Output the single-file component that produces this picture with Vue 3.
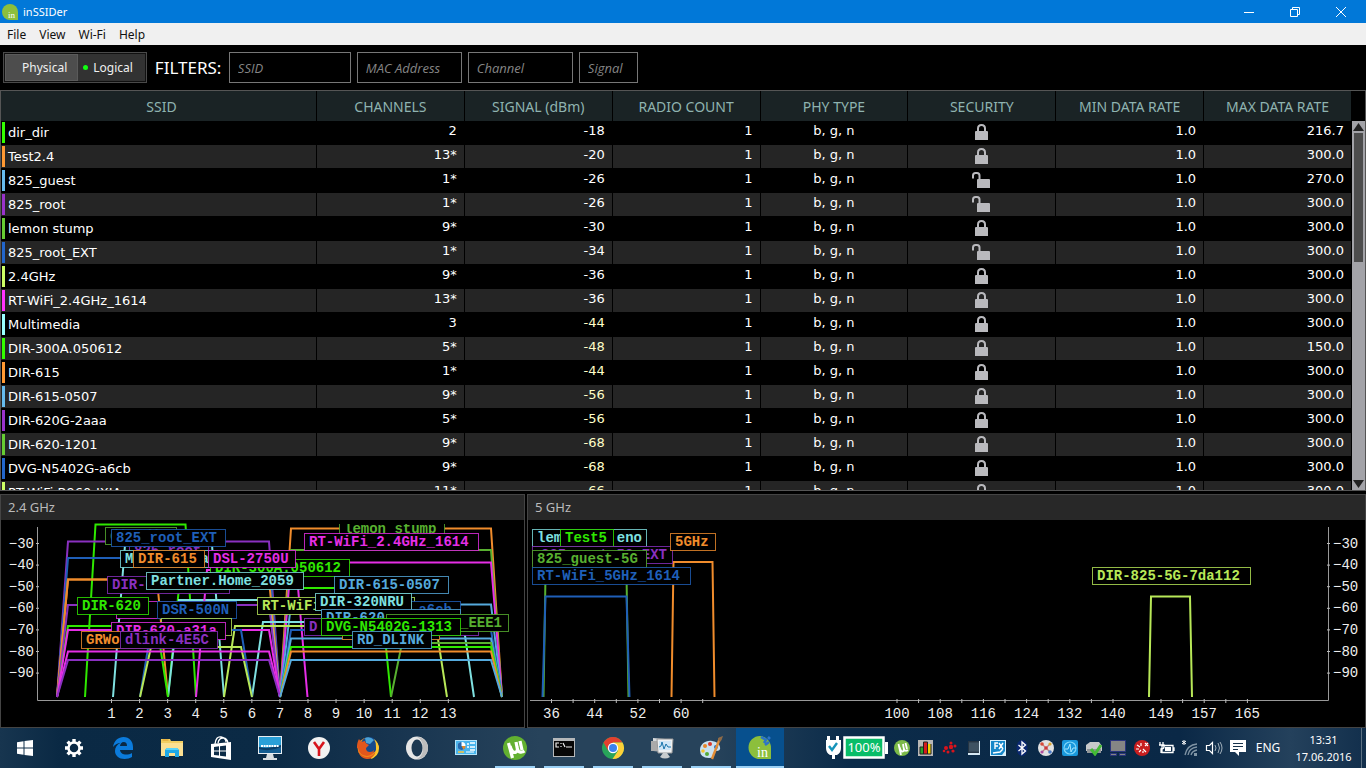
<script setup>
const palette = ['#33ff00', '#ff9933', '#66bbee', '#9933cc', '#66cc33', '#2266cc', '#ccff66', '#ff33ff', '#99ffff']

const columns = ['SSID', 'CHANNELS', 'SIGNAL (dBm)', 'RADIO COUNT', 'PHY TYPE', 'SECURITY', 'MIN DATA RATE', 'MAX DATA RATE']

const networks = [
  ['dir_dir', '2', -18, true, '216.7'],
  ['Test2.4', '13*', -20, true, '300.0'],
  ['825_guest', '1*', -26, false, '270.0'],
  ['825_root', '1*', -26, false, '300.0'],
  ['lemon stump', '9*', -30, true, '300.0'],
  ['825_root_EXT', '1*', -34, false, '300.0'],
  ['2.4GHz', '9*', -36, true, '300.0'],
  ['RT-WiFi_2.4GHz_1614', '13*', -36, true, '300.0'],
  ['Multimedia', '3', -44, true, '300.0'],
  ['DIR-300A.050612', '5*', -48, true, '150.0'],
  ['DIR-615', '1*', -44, true, '300.0'],
  ['DIR-615-0507', '9*', -56, true, '300.0'],
  ['DIR-620G-2aaa', '5*', -56, true, '300.0'],
  ['DIR-620-1201', '9*', -68, true, '300.0'],
  ['DVG-N5402G-a6cb', '9*', -68, true, '300.0'],
  ['RT-WiFi-B960-IXIA', '11*', -66, true, '300.0'],
].map(([ssid, channels, signal, locked, max], i) => ({ ssid, channels, signal, locked, max, color: palette[i % palette.length] }))

const filters = [
  { name: 'SSID', size: 'wide' },
  { name: 'MAC Address', size: 'mid' },
  { name: 'Channel', size: 'mid' },
  { name: 'Signal', size: 'small' },
]

const G = '#2fe800', O = '#f08c2c', L = '#55aadd', P = '#8a30c0', D = '#58b030', B = '#1f5fb8', Y = '#b8e858', M = '#e62ee6', C = '#7fe0e0'

const levels = [-30, -40, -50, -60, -70, -80, -90].map((v, i) => ({ v: '−' + Math.abs(v), y: 543.5 + i * 21.6 }))

const shape = ([x1, x2, top, slope, color]) => ({
  points: `${x1},697 ${x1 + slope},${top} ${x2 - slope},${top} ${x2},697`,
  color,
})

const traces24 = [
  [85, 196, 524.5, 10.5, G], [280, 502, 528.5, 11, O], [57, 280, 541.5, 11, P],
  [280, 502, 550, 11, D], [57, 280, 558, 11, B], [280, 502, 562.5, 11, M],
  [113, 224, 545, 12, C], [168, 391, 588, 11, G], [57, 168, 579.5, 11, O],
  [57, 280, 579.5, 11, O], [168, 280, 600, 11, C], [280, 502, 604.5, 11, L],
  [57, 280, 605, 11, P], [196, 307.5, 570, 11, M], [252, 474, 622, 11, C],
  [224, 447, 626, 11, Y], [57, 168, 626, 11, G], [57, 280, 630, 11, M],
  [140, 252, 630, 11, B], [280, 502, 630, 11, B], [280, 502, 638.5, 11, L],
  [140, 252, 647, 11, Y], [391, 502, 643, 11, D], [280, 502, 647, 11, G],
  [280, 502, 651.5, 11, O], [57, 280, 651.5, 11, M], [57, 280, 660, 11, P],
  [280, 502, 660, 11, L],
].map(shape)

const tag = ([x, y, w, color, text, offset = 5]) => ({ x: x + 0.5, y: y + 0.5, w, color, text, tx: x + offset })

const tags24 = [
  [105, 527, 71, D, 'dir_dir'],
  [129, 542, 79, P, '825_root'],
  [111, 529, 114, B, '825_root_EXT'],
  [339, 520, 105, D, 'lemon stump'],
  [304, 533, 174, M, 'RT-WiFi_2.4GHz_1614'],
  [210, 559, 139, G, 'DIR-300A.050612'],
  [120, 550, 97, C, 'Multimedia'],
  [133, 550, 71, O, 'DIR-615'],
  [208, 550, 87, M, 'DSL-2750U'],
  [107, 576, 122, P, 'DIR-620G-2aaa'],
  [146, 572, 157, C, 'Partner.Home_2059'],
  [334, 576, 114, L, 'DIR-615-0507'],
  [116, 601, 113, M, ''],
  [77, 597, 71, G, 'DIR-620'],
  [157, 601, 79, B, 'DSR-500N'],
  [161, 618, 70, Y, ''],
  [111, 622, 114, M, 'DIR-620-a31a'],
  [81, 631, 71, O, 'GRWo'],
  [120, 631, 97, P, 'dlink-4E5C'],
  [257, 597, 157, Y, 'RT-WiFi-B960-IXIA'],
  [321, 601, 139, B, 'DVG-N5402G-a6cb'],
  [315, 593, 96, C, 'DIR-320NRU'],
  [321, 609, 139, L, 'DIR-620'],
  [342, 622, 97, O, ''],
  [304, 618, 174, P, 'D'],
  [386, 614, 122, D, '_EEE1', 74],
  [321, 618, 139, G, 'DVG-N5402G-1313'],
  [352, 631, 79, L, 'RD_DLINK'],
].map(tag)

const channels24 = Array.from({ length: 13 }, (_, i) => ({ label: i + 1, x: 111.5 + i * 28.07 }))

const traces5 = [
  [671.5, 714.5, 562, 2, O],
  [543.5, 628.5, 575, 2, D],
  [542.5, 629.5, 596.5, 3, B],
  [1149, 1192, 596.5, 2, Y],
].map(shape)

const tags5 = [
  [532, 529, 114, C, 'lem'],
  [560, 529, 53, G, 'Test5'],
  [532, 546, 140, P, '825_root_5G_EXT', 9],
  [532, 550, 114, D, '825_guest-5G'],
  [532, 567, 158, B, 'RT-WiFi_5GHz_1614'],
  [670, 533, 45, O, '5GHz'],
  [1092, 567, 158, Y, 'DIR-825-5G-7da112'],
].map(tag)

const channels5 = [
  ...[36, 0, 44, 0, 52, 0, 60, 0].map((label, i) => ({ label, x: 551.5 + i * 21.6 })),
  ...[100, 0, 108, 0, 116, 0, 124, 0, 132, 0, 140].map((label, i) => ({ label, x: 897 + i * 21.6 })),
  ...[149, 0, 157, 0, 165].map((label, i) => ({ label, x: 1161 + i * 21.6 })),
]
</script>

<template>
  <div class="desktop">
    <header class="titlebar">
      <svg class="logo" width="16" height="16" viewBox="0 0 16 16" aria-hidden="true">
        <path d="M8 0a8 8 0 0 1 8 8v8H8A8 8 0 0 1 8 0z" fill="#8cbf3c" />
        <text x="6" y="14" class="logo-text">in</text>
      </svg>
      <h1>inSSIDer</h1>
      <div class="winbtns">
        <button type="button" aria-label="Minimize"><svg width="10" height="10"><path d="M0 5.500h10" stroke="#fff" /></svg></button>
        <button type="button" aria-label="Restore"><svg width="10" height="10"><path d="M.5 2.500h7v7h-7zM2.500 2V.5h7v7H8" stroke="#fff" fill="none" /></svg></button>
        <button type="button" aria-label="Close"><svg width="10" height="10"><path d="M0 0l10 10M10 0L0 10" stroke="#fff" /></svg></button>
      </div>
    </header>

    <nav class="menu">
      <button v-for="m in ['File', 'View', 'Wi-Fi', 'Help']" :key="m" type="button">{{ m }}</button>
    </nav>

    <section class="toolbar">
      <div class="switch">
        <button type="button" class="on">Physical</button>
        <button type="button"><i class="dot"></i>Logical</button>
      </div>
      <span class="filters">FILTERS:</span>
      <input v-for="f in filters" :key="f.name" type="text" :class="f.size" :placeholder="f.name" :aria-label="f.name" />
    </section>

    <section class="list">
      <div class="rows">
        <table>
          <thead>
            <tr><th v-for="c in columns" :key="c">{{ c }}</th></tr>
          </thead>
          <tbody>
            <tr v-for="n in networks" :key="n.ssid">
              <td class="ssid"><div class="name"><i class="bar" :style="{ background: n.color }"></i>{{ n.ssid }}</div></td>
              <td class="num">{{ n.channels }}</td>
              <td class="num" :class="{ weak: n.signal <= -44 }">{{ n.signal }}</td>
              <td class="num">1</td>
              <td class="phy">b, g, n</td>
              <td class="lock">
                <svg v-if="n.locked" width="20" height="18" viewBox="0 0 20 18" role="img" aria-label="Secured">
                  <path d="M6 9V5.500Q6 2 9.500 2t3.500 3.500V9" fill="none" stroke="#b9b9bd" stroke-width="2" />
                  <path d="M3 9q0-1 1-1h11q1 0 1 1v8H3z" fill="#b9b9bd" />
                </svg>
                <svg v-else width="20" height="18" viewBox="0 0 20 18" role="img" aria-label="Open">
                  <path d="M1 7.500V4.500Q1 2 3.500 2h1.500Q7.500 2 7.500 4.500V9" fill="none" stroke="#b9b9bd" stroke-width="2" />
                  <path d="M5 9q0-1 1-1h11q1 0 1 1v8H5z" fill="#b9b9bd" />
                </svg>
              </td>
              <td class="num">1.0</td>
              <td class="num">{{ n.max }}</td>
            </tr>
          </tbody>
        </table>
      </div>
      <div class="scroll" aria-hidden="true">
        <svg width="13" height="12"><path d="M1 10l5.500-8L12 10z" fill="#222" /></svg>
        <div class="thumb"></div>
        <svg class="down" width="13" height="12"><path d="M1 2l5.500 8L12 2z" fill="#222" /></svg>
      </div>
    </section>

    <section class="charts">
      <article class="panel ghz24">
        <h2>2.4 GHz</h2>
        <svg class="plot" viewBox="1 520 523 207" role="img" aria-label="2.4 GHz channel graph">
          <path class="axis" d="M37.500 527V700.500H520" />
          <g v-for="l in levels" :key="l.v">
            <path class="tick" :d="`M36 ${l.y}h3`" />
            <text class="scale" x="34" :y="l.y + 4" text-anchor="end">{{ l.v }}</text>
          </g>
          <g v-for="c in channels24" :key="c.label">
            <path class="tick" :d="`M${c.x} 699v4`" />
            <text class="scale" :x="c.x" y="718" text-anchor="middle">{{ c.label }}</text>
          </g>
          <polyline v-for="(t, i) in traces24" :key="'t' + i" class="trace" :points="t.points" :stroke="t.color" />
          <g v-for="(t, i) in tags24" :key="i">
            <rect :x="t.x" :y="t.y" :width="t.w" height="17" :stroke="t.color" class="box" />
            <text class="tag" :x="t.tx" :y="t.y + 12" :fill="t.color">{{ t.text }}</text>
          </g>
          <rect x="330" y="520" width="130" height="4" />
        </svg>
      </article>
      <article class="panel ghz5">
        <h2>5 GHz</h2>
        <svg class="plot" viewBox="528 520 837 207" role="img" aria-label="5 GHz channel graph">
          <path class="axis" d="M1328.500 527V700.500H530" />
          <g v-for="l in levels" :key="l.v">
            <path class="tick" :d="`M1327 ${l.y}h3`" />
            <text class="scale" x="1333" :y="l.y + 4">{{ l.v }}</text>
          </g>
          <g v-for="c in channels5" :key="c.x">
            <path class="tick" :d="`M${c.x} 699v4`" />
            <text v-if="c.label" class="scale" :x="c.x" y="718" text-anchor="middle">{{ c.label }}</text>
          </g>
          <polyline v-for="(t, i) in traces5" :key="'t' + i" class="trace" :points="t.points" :stroke="t.color" />
          <g v-for="(t, i) in tags5" :key="i">
            <rect :x="t.x" :y="t.y" :width="t.w" height="17" :stroke="t.color" class="box" />
            <text class="tag" :x="t.tx" :y="t.y + 12" :fill="t.color">{{ t.text }}</text>
          </g>
          <text class="tag" x="642" y="542" text-anchor="end" fill="#7fe0e0">eno</text>
        </svg>
      </article>
    </section>

    <footer class="taskbar">
      <div class="apps">
        <button type="button" aria-label="Start"><svg width="24" height="24" viewBox="0 0 24 24"><path d="M4 6.300l6.500-1v6.200H4zM11.500 5.100L20 4v7.500h-8.500zM4 12.500h6.500v6.200L4 17.700zM11.500 12.500H20V20l-8.500-1.100z" fill="#fff" /></svg></button>
        <button type="button" aria-label="Settings"><svg width="24" height="24" viewBox="0 0 24 24"><circle cx="12" cy="12" r="5.500" fill="none" stroke="#fff" stroke-width="2.500" /><path d="M12 3v3M12 18v3M3 12h3M18 12h3M5.600 5.600l2.200 2.200M16.200 16.200l2.200 2.200M18.400 5.600l-2.200 2.200M7.800 16.200l-2.200 2.200" stroke="#fff" stroke-width="3.400" /></svg></button>
        <button type="button" aria-label="Edge"><svg width="24" height="24" viewBox="0 0 24 24"><path d="M2 11C3 4.500 7.500 1 12.500 1 18.500 1 22 5.500 22 11v3H9c.3 3.200 3.200 4.500 6 4.500 2.400 0 4.300-.6 6-1.600V21c-2 1.200-4.600 2-7.400 2C8 23 4 19.500 4 15c0-3.500 2-6.600 5.600-8.200C7 7 4 8.500 2 11zm7-1h7c0-2.500-1-4-3.300-4C10.500 6 9.300 7.800 9 10z" fill="#0b7bdc" /></svg></button>
        <button type="button" aria-label="Explorer"><svg width="24" height="24" viewBox="0 0 24 24"><path d="M1 3h9l1 2h12v15H1z" fill="#f2cf62" /><path d="M1 7h22v13H1z" fill="#fbe092" /><path d="M2.500 4h6" stroke="#e09a25" /><path d="M5 21v-7l2-2h10l2 2v7h-4v-4H9v4z" fill="#1ea9e8" /><path d="M7 12h10l2 2H5z" fill="#58d4fa" /></svg></button>
        <button type="button" aria-label="Store"><svg width="24" height="24" viewBox="0 0 24 24"><path d="M2 8l20-2v18L2 21z" fill="#fff" /><path d="M6 8Q7 0 12 1t5 5M9 7q1-5 5-5t5 5" fill="none" stroke="#fff" stroke-width="1.300" /><path d="M5 11l5-.7v4.200H5zM11 10.200l6-.7v5h-6zM5 15.500h5v4l-5-.6zM11 15.500h6v5l-6-.8z" fill="#0d2c47" /></svg></button>
        <button type="button" aria-label="Lenovo"><svg width="24" height="24" viewBox="0 0 24 24"><path d="M0 0h24v18H0z" fill="#e8eef2" /><path d="M1 1h22v16H1z" fill="#0b3d66" /><path d="M1 1h22v8Q12 13 1 11z" fill="#2aa0d8" /><path d="M1 13q11 3 22-2v6H1z" fill="#145d91" /><path d="M3 10h18" stroke="#fff" stroke-width="2" stroke-dasharray="2 .6" /><path d="M9 18h6l1 4h3v2H5v-2h3z" fill="#d8dde0" /></svg></button>
        <button type="button" aria-label="Yandex"><svg width="24" height="24" viewBox="0 0 24 24"><circle cx="12" cy="12" r="11" fill="#f2f2f2" /><path d="M7 6l5 7 5-7M12 12v8" fill="none" stroke="#d8141c" stroke-width="2.600" /></svg></button>
        <button type="button" aria-label="Firefox"><svg width="24" height="24" viewBox="0 0 24 24"><circle cx="12" cy="12" r="10.500" fill="#f08a1c" /><circle cx="13" cy="9.500" r="8.500" fill="#164a8c" /><path d="M9 2q5-2 9 2l-4 4-4-1z" fill="#4aa3d8" /><path d="M1 12C1 7 2 5 3 3l2 3 4-1q0 2 2 3l2 1-3 3q0 4 4 4 3 0 4-2 0 5-7 6-8-1-9-8z" fill="#e2571c" /><path d="M2 15q3 6 10 6 6-1 8-6-1 8-9 8-7-1-9-8z" fill="#e2571c" /><path d="M18 3q5 4 5 9 0 9-9 11 7-5 6-12 0-5-2-8z" fill="#fbc52d" /></svg></button>
        <button type="button" aria-label="Opera"><svg width="24" height="24" viewBox="0 0 24 24"><ellipse cx="12" cy="12" rx="11" ry="11.500" fill="#e6e6e6" /><path d="M12 1a11 11 0 0 1 0 22q6-3 6-11T12 1z" fill="#bdbdbd" /><ellipse cx="12" cy="12" rx="5.500" ry="8.500" fill="#1c3851" /></svg></button>
        <button type="button" aria-label="Control Panel"><svg width="24" height="24" viewBox="0 0 24 24"><path d="M1 4h22v15H1z" fill="#b5e4fa" /><path d="M2 5h20v13H2z" fill="#48b4ec" /><circle cx="7.500" cy="10" r="4" fill="#fff" /><path d="M7.500 10V6a4 4 0 1 0 4 4z" fill="#2269b0" /><path d="M7.500 10h4a4 4 0 0 1-2 3.500z" fill="#e58a25" /><path d="M13 8h2M16 7h5M13 11h2M16 11h5M16 14h5" stroke="#fff" stroke-width="1.500" /><path d="M4 16h6" stroke="#f9c440" stroke-width="1.500" /><path d="M12 16h8" stroke="#fff" /></svg></button>
        <button type="button" class="open" aria-label="uTorrent"><svg width="24" height="24" viewBox="0 0 24 24"><circle cx="12" cy="12" r="12" fill="#62b030" /><path d="M5.500 7l4 15M7 10q2 8 6 6 2-1 1-5l-1-5M14.500 13q1 4 4 3 1.500 0 3-1M17 5l2 9" fill="none" stroke="#fff" stroke-width="3.200" /></svg></button>
        <button type="button" class="open" aria-label="Command Prompt"><svg width="24" height="24" viewBox="0 0 24 24"><path d="M1 2h22v19H1z" fill="#b5b8ba" /><path d="M2 5h20v15H2z" fill="#070707" /><path d="M7 7H4v4h3M9 7v1M9 10v1M11 7l2 4M14 11h6" fill="none" stroke="#eee" stroke-width="1.200" /></svg></button>
        <button type="button" class="open" aria-label="Chrome"><svg width="24" height="24" viewBox="0 0 24 24"><circle cx="12" cy="12" r="11" fill="#28a45a" /><path d="M2.500 6.500A11 11 0 0 1 21.500 6.500H12L7.200 14.700z" fill="#e3402f" /><path d="M21.500 6.500A11 11 0 0 1 11.500 23L17 14.800 12 6.500z" fill="#fdd038" /><circle cx="12" cy="12" r="5.200" fill="#fff" /><circle cx="12" cy="12" r="4" fill="#3c82ee" /></svg></button>
        <button type="button" class="open" aria-label="Monitor"><svg width="24" height="24" viewBox="0 0 24 24"><path d="M3 2l12 1v13L3 15z" fill="#d5d8da" /><path d="M1 5l6 0v10H1z" fill="#aaa" /><path d="M7 3h16l-1 14H8z" fill="#eef1f3" stroke="#999" /><path d="M9 5h12l-1 9H9z" fill="#cfe6f7" /><path d="M9 11l2-1 1-4 2 7 2-5 2 3h3" fill="none" stroke="#1874ac" /><path d="M13 17h4l3 4q-5 3-10 0z" fill="#c8ccce" /></svg></button>
        <button type="button" class="open" aria-label="Paint"><svg width="24" height="24" viewBox="0 0 24 24"><path d="M1 14C1 8 7 4 13 5q7 1 8 6 1 4-4 4-3 0-2 3 1 4-5 4-9 0-9-8z" fill="#cae2f1" /><circle cx="6" cy="10" r="2" fill="#e8862a" /><circle cx="11" cy="8" r="2" fill="#d83a2e" /><circle cx="4" cy="15" r="1.800" fill="#f4c32f" /><circle cx="8" cy="18" r="2" fill="#55aa37" /><circle cx="17" cy="11" r="2" fill="#286ec4" /><path d="M21 2L13 23" stroke="#e28d37" stroke-width="2.400" /><path d="M19 4q0-3 5-4-1 4-3 6z" fill="#8f6b48" /></svg></button>
        <button type="button" class="open active" aria-label="inSSIDer">
          <svg width="24" height="24" viewBox="0 0 24 24"><path d="M12 0a12 12 0 0 1 11 12v11H12A11.500 11.500 0 0 1 12 0z" fill="#8cbf3c" /><path d="M13 1l5 3-2 3M17 9l4-3M20 1l2 2" fill="none" stroke="#2c73c8" stroke-width="2.600" /><text x="9" y="21" class="in-text">in</text></svg>
        </button>
      </div>

      <div class="tray">
        <svg width="66" height="26" viewBox="0 0 66 26" role="img" aria-label="Battery 100%"><path d="M3 1h3v4h6V1h3v4h2v8q0 5-4 7h-2v4H8v-4H6q-4-2-4-7V5h1z" fill="#fff" /><path d="M5 11l3 4 5-7" fill="none" stroke="#1694ba" stroke-width="2.400" /><path d="M20.500 2.500h39v20h-39z" fill="#08bd68" stroke="#fff" stroke-width="2.500" /><path d="M61 7h3v12h-3z" fill="#fff" /><text x="40" y="17" text-anchor="middle" class="battery">100%</text></svg>
        <svg width="24" height="16" viewBox="-4 0 24 16"><circle cx="8" cy="8" r="8" fill="#7cba48" /><path d="M4.500 4l2.500 11M5.500 7q1.500 6 4 4 1-1 0-4L9 4M10 9q1 3 4 1M11.500 3l1.500 6" fill="none" stroke="#fff" stroke-width="1.800" /></svg>
        <svg width="24" height="16" viewBox="-4 0 24 16"><path d="M0 0h15v16H0z" fill="#b9b8b6" /><path d="M2 7h4v7H2z" fill="#28a42c" /><path d="M6 2h3v12H6z" fill="#d81c1c" /><path d="M9 4h4v10H9z" fill="#f2d400" /><path d="M2 14V7h3M5.500 14V2h4v12M13 4v10H2" fill="none" stroke="#222" /></svg>
        <svg width="24" height="16" viewBox="-4 0 24 16"><g fill="#d8141c"><circle cx="4" cy="8" r="2" /><circle cx="9" cy="7" r="2.200" /><circle cx="9" cy="3" r="1.500" /><circle cx="13" cy="6" r="1.500" /><circle cx="11" cy="11" r="1.600" /><circle cx="6" cy="12" r="1.500" /><circle cx="2" cy="11" r="1.300" /></g></svg>
        <svg width="24" height="16" viewBox="-4 0 24 16"><path d="M2 1h12v14H2z" fill="#d4e6f2" /><path d="M2 1h11v12H2z" fill="#253544" /><path d="M4 2v10M6 2v10M8 2v10M10 2v10M12 2v10M3 4h10M3 6h10M3 8h10M3 10h10" stroke="#61788b" stroke-width=".5" /></svg>
        <svg width="24" height="16" viewBox="-4 0 24 16"><path d="M0 0h16v16H0z" fill="#d8f0fc" /><path d="M1 1h14v10l-3 4H1z" fill="#1687c9" /><path d="M5 9V3h3M5 6h3M9 3l4 6M13 3L9 9M3 13l7-1 3-3" fill="none" stroke="#fff" stroke-width="1.400" /></svg>
        <svg width="24" height="16" viewBox="-4 0 24 16"><ellipse cx="8" cy="8" rx="5.500" ry="8" fill="#0a2871" /><path d="M4.500 5l7 6L8 14V2l3.500 3-7 6" fill="none" stroke="#fff" stroke-width="1.300" /></svg>
        <svg width="24" height="16" viewBox="-4 0 24 16"><circle cx="8" cy="8" r="8" fill="#e2e2e2" /><path d="M4 4l8 8M12 4l-8 8" stroke="#c08080" stroke-width="1.200" /><circle cx="8" cy="8" r="1.800" fill="#d03838" /><circle cx="4" cy="4" r="1.800" fill="#d74a38" /><circle cx="12" cy="4" r="1.600" fill="#dba42c" /><circle cx="12" cy="12" r="1.800" fill="#4a7ac8" /><circle cx="4" cy="12" r="1.600" fill="#b04ea0" /></svg>
        <svg width="24" height="16" viewBox="-4 0 24 16"><rect width="16" height="16" rx="2" fill="#1998dc" /><circle cx="8" cy="8" r="6" fill="none" stroke="#7fd6fa" stroke-width="1.200" /><path d="M3 9h3l2-5 1 8 2-4h3" fill="none" stroke="#a8e8ff" /></svg>
        <svg width="24" height="16" viewBox="-4 0 24 16"><path d="M0 5l4-3h9l3 4v5H0z" fill="#c7c9ca" /><path d="M1 9h14v4H1z" fill="#909598" /><path d="M5 9l4 5 6-9" fill="none" stroke="#43bb35" stroke-width="3" /></svg>
        <svg width="24" height="16" viewBox="-4 0 24 16"><path d="M.5.500h15v11H.5zM.5 13.500h6v2h-6zM9.500 13.500h6v2h-6z" fill="#858585" stroke="#2b347e" /></svg>
        <svg width="24" height="16" viewBox="-4 0 24 16"><circle cx="8" cy="8" r="8" fill="#c81e1f" /><path d="M3 5l3 2M2 9h3M5 12l2-2M7 3v3M9 9l3 3M11 3l3 3M14 3l-3 3M9 13v-2" stroke="#fff" stroke-width="1.200" /></svg>
        <svg width="24" height="16" viewBox="-4 0 24 16"><path d="M4 5.500h11v7H4zM15 8h1v3M2 2v3M5 2v3M1 5h5v2q0 2-3 2v4" fill="none" stroke="#fff" stroke-width="1.300" /><path d="M7 7h6v4H7z" fill="#fff" /></svg>
        <svg width="24" height="16" viewBox="-4 0 24 16"><path d="M2 0v5M0 1l4 3M4 1L0 4" stroke="#fff" /><path d="M3 15Q5 5 15 4M6 15Q7 8 15 7M9 15Q10 11 15 10" fill="none" stroke="#8195a5" stroke-width="1.300" /><path d="M12 13h3v3h-3z" fill="#8195a5" /></svg>
        <svg width="24" height="16" viewBox="-4 0 24 16"><path d="M.5 5.500h3l3-3v11l-3-3h-3z" fill="none" stroke="#fff" stroke-width="1.200" /><path d="M9 5q2 3 0 6M12 3q3 5 0 10M14 2q4 6 0 12" fill="none" stroke="#a0afba" /></svg>
        <svg width="24" height="16" viewBox="-4 0 24 16"><path d="M0 0h16v12H9v4l-4-4H0z" fill="#fff" /><path d="M3 3.500h10M3 6.500h10M3 9.500h5" stroke="#18334c" stroke-width="1.200" /></svg>
        <button type="button" class="lang">ENG</button>
        <time class="clock"><span>13:31</span><span>17.06.2016</span></time>
        <i class="peek"></i>
      </div>
    </footer>
  </div>
</template>

<style>
body { margin: 0; background: #000; }
</style>

<style scoped>
.desktop { display: flex; flex-direction: column; height: 100vh; background: #000; color: #fff; font: 12px/16px "Noto Sans", "Open Sans", sans-serif; overflow: hidden; }
button { border: 0; padding: 0; margin: 0; background: none; color: inherit; font: inherit; }
h1, h2 { margin: 0; font-weight: 400; }
svg { display: block; }

.titlebar { flex: none; display: flex; align-items: center; height: 23px; padding-left: 2px; background: #0178d8; }
.titlebar h1 { font-size: 11px; margin-left: 5px; }
.logo-text { font: 9px "Liberation Serif", serif; fill: #fff; }
.winbtns { display: flex; margin-left: auto; padding-right: 2px; }
.winbtns button { width: 46px; height: 21px; display: flex; align-items: center; justify-content: center; }

.menu { flex: none; display: flex; gap: 13px; height: 22px; padding-left: 7px; background: #f0f0f0; color: #111; line-height: 24px; }

.toolbar { flex: none; display: flex; align-items: center; gap: 6px; height: 45px; padding-left: 3px; }
.switch { display: flex; border: 1px solid #4a4a4a; padding: 1px; background: #101010; }
.switch button { height: 27px; padding: 0 12px 0 5px; font-size: 12px; background: #323232; color: #f0f0f0; display: flex; align-items: center; }
.switch .on { background: #4d4d4d; padding: 0 10px 0 16px; border: 1px solid #5a5a5a; }
.dot { width: 5px; height: 5px; margin-right: 5px; border-radius: 50%; background: #1f1; }
.filters { width: 66px; font-size: 17px; margin: 0 2px; }
.toolbar input { box-sizing: border-box; height: 31px; border: 1px solid #777; background: #000; color: #ccc; padding: 0 8px; font: italic 13px "Open Sans", "Noto Sans", sans-serif; border-radius: 0; }
.toolbar input::placeholder { color: #858585; opacity: 1; }
.wide { width: 122px; }
.mid { width: 105px; }
.small { width: 59px; }

.list { flex: 1; min-height: 0; display: flex; border: 1px solid #555; overflow: hidden; }
.rows { flex: 1; min-width: 0; overflow: hidden; }
table { width: 100%; table-layout: fixed; border-collapse: separate; border-spacing: 0; }
th { box-sizing: border-box; height: 30px; padding: 2px 0 0; border-right: 1px solid #000; background: #1a2325; color: #8fb3b0; font-size: 14px; font-weight: 400; }
th:first-child { width: 316px; padding-left: 6px; }
td { box-sizing: border-box; height: 24px; padding: 0 7px 4px; border-right: 1px solid #000; border-bottom: 1px solid #000; font: 13px/19px "DejaVu Sans", sans-serif; overflow: hidden; white-space: nowrap; }
tbody tr:nth-child(even) td { background: #252525; }
td.ssid { padding: 0; }
.name { display: flex; align-items: center; gap: 3px; height: 23px; padding-left: 1px; }
.bar { width: 3px; height: 21px; }
.num { text-align: right; }
.weak { color: #ffffc8; }
.phy { text-align: center; }
td.lock { padding: 0 0 1px; }
.lock svg { margin: 0 auto; }
.scroll { flex: none; width: 13px; margin-top: 30px; display: flex; flex-direction: column; background: #a3a3a8; }
.thumb { height: 129px; margin: 0 2px; background: #4d4d4d; }
.down { margin-top: auto; }

.charts { flex: none; display: flex; gap: 2px; padding-top: 3px; }
.panel { border: 1px solid #444; min-width: 0; }
.ghz24 { flex: 523 1 0; }
.ghz5 { flex: 837 1 0; }
.panel h2 { height: 25px; padding-left: 7px; background: #282828; font-size: 13px; line-height: 25px; color: #bbb; }
.plot { width: 100%; height: 207px; }
.axis { fill: none; stroke: #999; }
.tick { stroke: #bbb; }
.scale { font: 14px "Liberation Mono", monospace; fill: #eee; }
.trace { fill: none; stroke-width: 2; }
.box { fill: #000; stroke-opacity: .8; }
.tag { font: bold 14px "Liberation Mono", monospace; }

.taskbar { flex: none; display: flex; justify-content: space-between; height: 40px; background: linear-gradient(90deg, #17354f 0, #0a2944 60px, #0b2a45 270px, #17344f 390px, #27435b 540px, #27435b 710px, #0b2b49 850px, #0a2846 1180px, #24415c 1290px, #122f4c 100%); }
.apps { display: flex; gap: 1px; padding-left: 1px; }
.apps button { position: relative; box-sizing: border-box; width: 48px; height: 40px; padding: 8px 12px; }
.open::after { content: ""; position: absolute; left: 4px; right: 4px; bottom: 0; height: 2px; background: #9ad0f5; }
.active { background: #07508e; }
.active::after { left: 0; right: 0; }
.in-text { font: 14px "Liberation Serif", serif; fill: #fff; }
.tray { display: flex; align-items: center; }
.battery { font: 13px "Noto Sans", sans-serif; fill: #fff; }
.lang { width: 36px; font-size: 12px; }
.clock { width: 75px; display: flex; flex-direction: column; align-items: center; font-size: 11px; line-height: 17px; }
.peek { width: 1px; height: 40px; margin: 0 4px 0 0; background: #5c7183; }
</style>
